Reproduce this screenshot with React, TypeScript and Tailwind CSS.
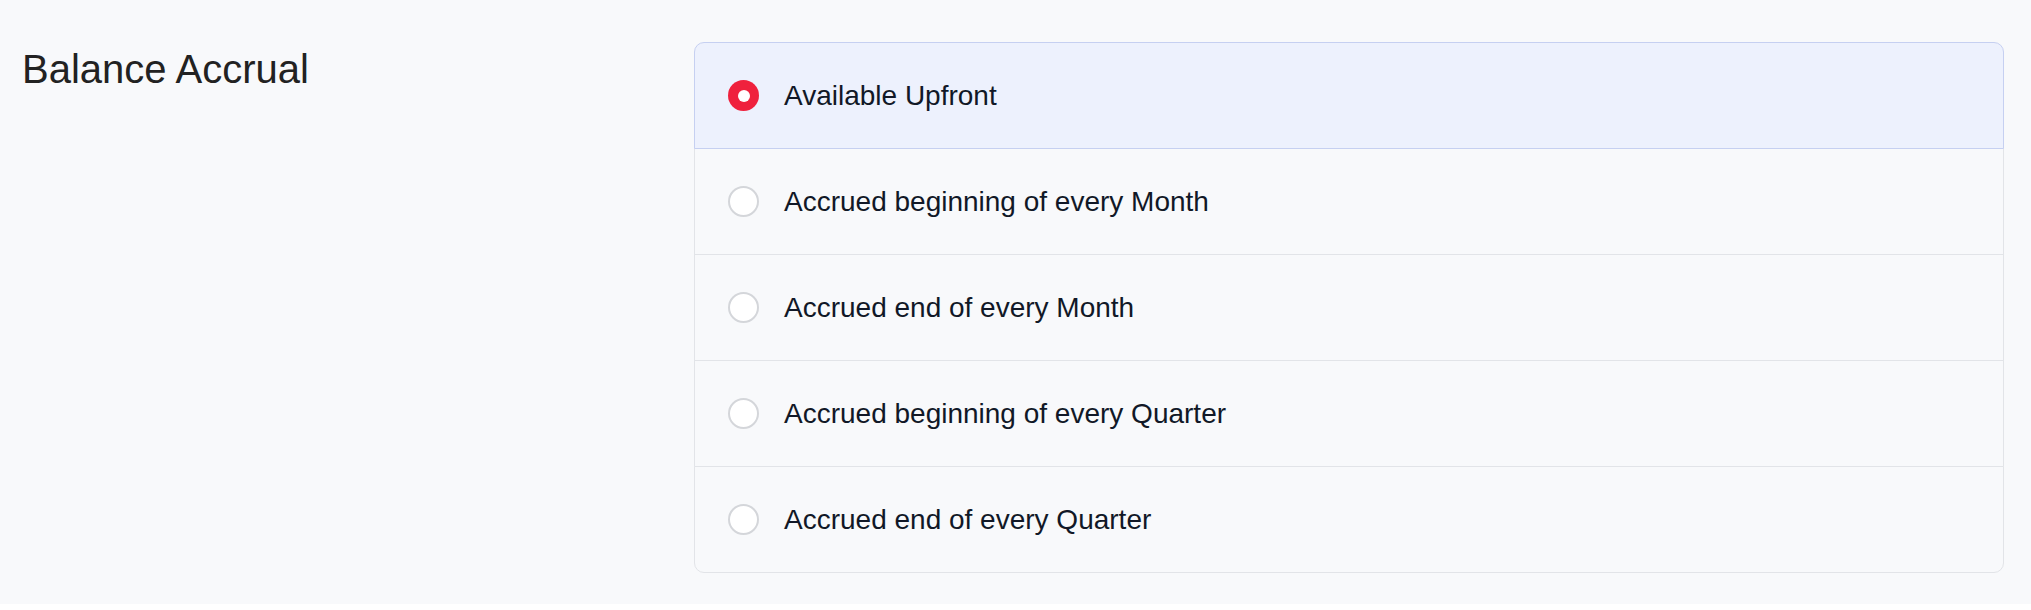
import React from "react";

const options = [
  "Available Upfront",
  "Accrued beginning of every Month",
  "Accrued end of every Month",
  "Accrued beginning of every Quarter",
  "Accrued end of every Quarter",
];

export default function App() {
  const selected = 0;
  return (
    <div className="w-[2031px] h-[610px] bg-white" style={{ fontFamily: '"Liberation Sans", Arial, sans-serif' }}>
      <div className="h-[604px] bg-[#f8f9fb] flex pt-[42px]">
        <div className="w-[694px] shrink-0 pl-[22px] pt-[4px]">
          <h2 className="text-[40px] leading-[46px] text-[#222222] font-normal">Balance Accrual</h2>
        </div>
        <div className="w-[1310px] flex flex-col">
          {options.map((label, i) => {
            const isSel = i === selected;
            return (
              <div
                key={label}
                className={
                  "flex items-center h-[107px] border pl-[33px] " +
                  (i > 0 ? "-mt-px " : "") +
                  (i === 0 ? "rounded-t-[10px] " : "") +
                  (i === options.length - 1 ? "rounded-b-[10px] " : "") +
                  (isSel
                    ? "relative z-10 bg-[#edf1fd] border-[#c6d0f1]"
                    : "border-[#e2e4e8] bg-[#f8f9fb]")
                }
              >
                {isSel ? (
                  <div className="w-[31px] h-[31px] rounded-full bg-[#ef213d] flex items-center justify-center shrink-0">
                    <div className="w-[12px] h-[12px] rounded-full bg-white" />
                  </div>
                ) : (
                  <div className="w-[31px] h-[31px] rounded-full bg-white border-2 border-[#d4d6da] shrink-0" />
                )}
                <span className="ml-[25px] text-[28px] text-[#111827]">{label}</span>
              </div>
            );
          })}
        </div>
      </div>
    </div>
  );
}
